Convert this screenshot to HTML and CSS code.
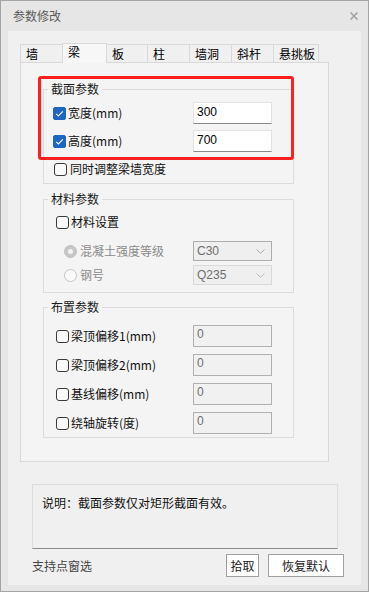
FILE: index.html
```html
<!DOCTYPE html>
<html lang="zh">
<head>
<meta charset="utf-8">
<title>参数修改</title>
<link rel="stylesheet" href="styles.css">
</head>
<body>
<div class="window">
  <div class="titlebar">
    <span class="title">参数修改</span>
    <svg class="close" width="8" height="8" viewBox="0 0 8 8"><path d="M0.5 0.5L7.5 7.5M7.5 0.5L0.5 7.5" stroke="#a0a0a0" stroke-width="1.5" fill="none"/></svg>
  </div>
  <div class="inner">
    <div class="tabs">
      <div class="tab w43">墙</div>
      <div class="tab sel w45">梁</div>
      <div class="tab w42">板</div>
      <div class="tab w43">柱</div>
      <div class="tab w43">墙洞</div>
      <div class="tab w43">斜杆</div>
      <div class="tab w46">悬挑板</div>
    </div>
    <div class="panel">
      <fieldset class="group g1">
        <legend>截面参数</legend>
        <div class="row">
          <label class="chk"><span class="box on"><svg width="13" height="13" viewBox="0 0 13 13"><path d="M3.2 6.8L5.4 9L9.8 4.3" stroke="#fff" stroke-width="1.1" fill="none"/></svg></span>宽度(mm)</label>
          <div class="field">300</div>
        </div>
        <div class="row">
          <label class="chk"><span class="box on"><svg width="13" height="13" viewBox="0 0 13 13"><path d="M3.2 6.8L5.4 9L9.8 4.3" stroke="#fff" stroke-width="1.1" fill="none"/></svg></span>高度(mm)</label>
          <div class="field">700</div>
        </div>
        <div class="row">
          <label class="chk wide"><span class="box"></span>同时调整梁墙宽度</label>
        </div>
      </fieldset>
      <fieldset class="group g2">
        <legend>材料参数</legend>
        <div class="row r22">
          <label class="chk"><span class="box"></span>材料设置</label>
        </div>
        <div class="row r20 first">
          <label class="radio dis"><span class="dot on"></span>混凝土强度等级</label>
          <div class="select dark"><span>C30</span><svg width="9" height="5" viewBox="0 0 9 5"><path d="M0.5 0.5L4.5 4.3L8.5 0.5" stroke="#a8a8a8" fill="none"/></svg></div>
        </div>
        <div class="row r20 second">
          <label class="radio dis"><span class="dot"></span>钢号</label>
          <div class="select"><span>Q235</span><svg width="9" height="5" viewBox="0 0 9 5"><path d="M0.5 0.5L4.5 4.3L8.5 0.5" stroke="#b8b8b8" fill="none"/></svg></div>
        </div>
      </fieldset>
      <fieldset class="group g3">
        <legend>布置参数</legend>
        <div class="row">
          <label class="chk"><span class="box"></span>梁顶偏移1(mm)</label>
          <div class="field off">0</div>
        </div>
        <div class="row">
          <label class="chk"><span class="box"></span>梁顶偏移2(mm)</label>
          <div class="field off">0</div>
        </div>
        <div class="row">
          <label class="chk"><span class="box"></span>基线偏移(mm)</label>
          <div class="field off">0</div>
        </div>
        <div class="row">
          <label class="chk"><span class="box"></span>绕轴旋转(度)</label>
          <div class="field off">0</div>
        </div>
      </fieldset>
      <div class="mark"></div>
    </div>
    <div class="note">说明：截面参数仅对矩形截面有效。</div>
    <div class="footer">
      <span class="hint">支持点窗选</span>
      <div class="btns">
        <button class="btn b1">拾取</button>
        <button class="btn b2">恢复默认</button>
      </div>
    </div>
  </div>
</div>
</body>
</html>
```
FILE: styles.css
```css
* { box-sizing: border-box; }
html, body { margin: 0; padding: 0; }
body {
  width: 369px;
  height: 592px;
  font-family: "Noto Sans CJK SC", "Microsoft YaHei", sans-serif;
  font-size: 12px;
  color: #111;
  background: #ffffff;
}
.window {
  width: 369px;
  height: 592px;
  border: 1px solid #a4a4a4;
  background: #e6e6e6;
  display: flex;
  flex-direction: column;
}
.titlebar {
  height: 30px;
  flex: none;
  display: flex;
  align-items: center;
  justify-content: space-between;
  padding: 0 10px 0 12px;
}
.title { color: #5a5a5a; line-height: 16px; }
.close { display: block; }
.inner {
  flex: 1;
  margin: 0 7px 6px;
  background: #f0f0f0;
  display: flex;
  flex-direction: column;
}
.tabs {
  display: flex;
  align-items: flex-end;
  height: 19px;
  margin: 12px 0 0 12px;
  position: relative;
  z-index: 1;
}
.tab {
  height: 18px;
  margin-right: -1px;
  border: 1px solid #d9d9d9;
  border-bottom: none;
  background: #f0f0f0;
  padding-left: 5px;
  line-height: 17px;
  color: #000;
  font-size: 12px;
}
.tab.sel {
  height: 20px;
  margin-bottom: -1px;
  background: #f7f7f7;
  line-height: 15px;
  position: relative;
  z-index: 2;
}
.w42 { width: 42px; }
.w43 { width: 43px; }
.w45 { width: 45px; }
.w46 { width: 46px; }
.panel {
  margin-left: 12px;
  width: 309px;
  height: 400px;
  flex: none;
  border: 1px solid #d9d9d9;
  background: #f4f4f4;
  position: relative;
  padding: 18px 0 0 22px;
}
.group {
  width: 251px;
  margin: 0;
  border: 1px solid #dcdcdc;
  padding: 5px 0 3px 0;
  min-width: 0;
  display: flex;
  flex-direction: column;
}
.group legend {
  margin-left: 4px;
  padding: 0 3px;
  line-height: 16px;
  font-size: 12px;
  color: #1a1a1a;
}
.g1 { gap: 6px; }
.g1 .row { padding-left: 9px; grid-template-columns: 140px 79px; }
.g2 { margin-top: 7px; padding: 4px 0 7px 0; }
.g2 .row { padding-left: 12px; grid-template-columns: 137px 79px; }
.g2 .r22 { height: 22px; }
.g2 .r20 { height: 20px; }
.g2 .first { margin-top: 8px; }
.g2 .second { margin-top: 4px; }
.g3 { margin-top: 6px; padding: 10px 0 3px 0; gap: 7px; }
.g3 .row { padding-left: 12px; grid-template-columns: 137px 79px; }
.row {
  display: grid;
  height: 22px;
  align-items: center;
}
.chk, .radio {
  display: flex;
  align-items: center;
  white-space: nowrap;
  line-height: 16px;
  color: #111;
}
.box {
  width: 13px;
  height: 13px;
  border: 1px solid #3a3a3a;
  border-radius: 3px;
  background: #fafafa;
  margin-right: 2px;
  flex: none;
  display: block;
}
.box svg { display: block; margin: -1px; }
.box.on { background: #1d66c2; border-color: #1d66c2; border-radius: 2px; }
.wide .box { margin-left: 1px; margin-right: 3px; }
.radio { padding-left: 8px; }
.radio.dis { color: #8a8a8a; }
.dot {
  width: 13px;
  height: 13px;
  border: 1px solid #c4c4c4;
  border-radius: 50%;
  background: #fafafa;
  margin-right: 3px;
  flex: none;
  display: flex;
  align-items: center;
  justify-content: center;
}
.dot.on { background: #c6c6c6; border-color: #c0c0c0; }
.dot.on::after {
  content: "";
  width: 5px;
  height: 5px;
  border-radius: 50%;
  background: #f4f4f4;
}
.field {
  width: 79px;
  height: 22px;
  background: #ffffff;
  border: 1px solid #e3e3e3;
  border-bottom-color: #8a8a8a;
  padding-left: 3px;
  line-height: 19px;
  font-family: "Liberation Sans", "Noto Sans", sans-serif;
  font-size: 12px;
  color: #000;
}
.field.off {
  background: #f1f1f1;
  border: 1px solid #b0b0b0;
  color: #6e6e6e;
  line-height: 16px;
}
.select {
  width: 79px;
  height: 20px;
  border: 1px solid #d9d9d9;
  background: #efefef;
  display: flex;
  align-items: center;
  justify-content: space-between;
  padding: 0 6px 0 3px;
  font-family: "Liberation Sans", "Noto Sans", sans-serif;
  font-size: 12px;
  color: #6e6e6e;
}
.select.dark { border-color: #adadad; }
.select svg { display: block; }
.mark {
  position: absolute;
  left: 17px;
  top: 13px;
  width: 256px;
  height: 84px;
  border: 3px solid #ff1f1f;
  border-radius: 3px;
  pointer-events: none;
}
.note {
  margin: 22px 0 0 24px;
  width: 306px;
  height: 65px;
  flex: none;
  border: 1px solid #dedede;
  border-bottom-color: #8c8c8c;
  background: #f0f0f0;
  padding: 10px 9px 0;
  line-height: 16px;
  color: #111;
}
.footer {
  margin: 5px 17px 0 24px;
  height: 23px;
  display: flex;
  align-items: center;
  justify-content: space-between;
}
.hint { color: #444; line-height: 16px; }
.btns { display: flex; gap: 9px; }
.btn {
  height: 23px;
  border: 1px solid #a0a0a0;
  background: #ffffff;
  font-family: "Noto Sans CJK SC", "Microsoft YaHei", sans-serif;
  font-size: 12px;
  color: #222;
  padding: 0;
  margin: 0;
  line-height: 20px;
}
.b1 { width: 33px; }
.b2 { width: 76px; }
```
